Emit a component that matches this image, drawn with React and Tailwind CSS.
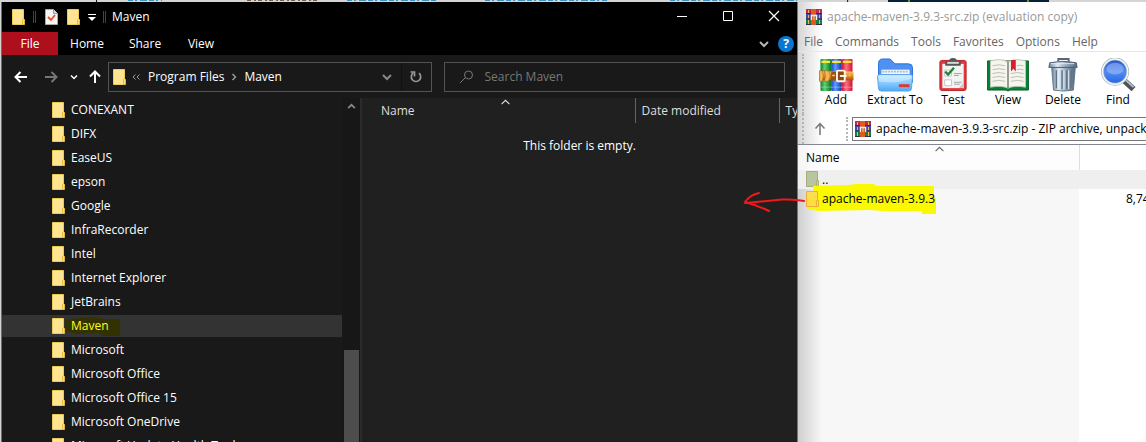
import React from "react";

const folders = ["CONEXANT", "DIFX", "EaseUS", "epson", "Google", "InfraRecorder", "Intel", "Internet Explorer", "JetBrains", "Maven", "Microsoft", "Microsoft Office", "Microsoft Office 15", "Microsoft OneDrive", "Microsoft Update Health Tools"];

function Folder() {
  return (
    <svg className="shrink-0" width="13" height="16" viewBox="0 0 13 16" aria-hidden="true">
      <path d="M.5.5h11v15H.5z" fill="#ffe591" stroke="#eecb55" />
      <path d="M10.5 15.500V10.500l1-1 1 1v5z" fill="#ffe07a" stroke="#e3b93b" />
    </svg>
  );
}

function Glyph({ d, size = 16, className = "", width = 2 }) {
  return (
    <svg className={`shrink-0 ${className}`} width={size} height={size} viewBox="0 0 16 16" fill="none" stroke="currentColor" strokeWidth={width} aria-hidden="true">
      <path d={d} />
    </svg>
  );
}

function Archive() {
  return (
    <svg className="shrink-0" width="16" height="16" viewBox="0 0 16 16" aria-hidden="true">
      <path d="M0 0h16v5H0z" fill="#c2274e" />
      <path d="M0 5h16v5H0z" fill="#4446a8" />
      <path d="M0 10h16v6H0z" fill="#168044" />
      <path d="M0 4.5h16M0 10h16M0 15.5h16" stroke="#302c48" />
      <path d="M2.500 1v3M2.500 6v3M2.500 11v4M13.500 1v3M13.500 6v3M13.500 11v4" stroke="#e8b95c" />
      <path d="M5 0h5v16H5z" fill="#de5a22" />
      <path d="M5.500 11V6.500h5V11" fill="#b33a1c" stroke="#f4eee5" strokeWidth="1.500" />
      <path d="M8 6v5" stroke="#fff3b0" />
    </svg>
  );
}

function Books() {
  return (
    <svg width="36" height="34" viewBox="0 1 36 35" aria-hidden="true">
      <defs>
        <linearGradient id="gbook"><stop stopColor="#137b35" /><stop offset=".4" stopColor="#5bd36d" /><stop offset="1" stopColor="#087428" /></linearGradient>
        <linearGradient id="bbook"><stop stopColor="#1745bd" /><stop offset=".4" stopColor="#5d9bff" /><stop offset="1" stopColor="#1535a1" /></linearGradient>
        <linearGradient id="rbook"><stop stopColor="#c41238" /><stop offset=".4" stopColor="#ff7180" /><stop offset="1" stopColor="#cb1230" /></linearGradient>
        <linearGradient id="belt" x2="0" y2="1"><stop stopColor="#f7c765" /><stop offset=".5" stopColor="#e58b22" /><stop offset="1" stopColor="#a54d0c" /></linearGradient>
      </defs>
      <rect x="2" y="2" width="11" height="33" rx="1" fill="url(#gbook)" />
      <rect x="13" y="2" width="11" height="33" rx="1" fill="url(#bbook)" />
      <rect x="24" y="2" width="11" height="33" rx="1" fill="url(#rbook)" />
      <path d="M3 5h9M14 5h9M25 5h9" stroke="#ffe438" strokeWidth="2.500" />
      <path d="M2 31h33" stroke="#eef1df" opacity=".4" />
      <path d="M1 15h35v9H1z" fill="url(#belt)" />
      <path d="M1 14h3q2 5 0 11H1zM6 14h4q4 5 0 11H6q2-6 0-11z" fill="#f5b650" stroke="#ad651c" strokeWidth=".7" />
      <path d="M13 15h5v9h-5z" fill="#a3500f" />
      <rect x="19" y="14" width="8" height="11" rx="1" fill="#90480c" stroke="#fff4e9" strokeWidth="2" />
      <path d="M22 19.500h7" stroke="#f9f6ef" strokeWidth="2" />
      <path d="M14 19h3M31 19h2" stroke="#f4bf74" strokeWidth="1.500" />
    </svg>
  );
}

function BlueFolder() {
  return (
    <svg width="38" height="34" viewBox="0 1 38 35" aria-hidden="true">
      <defs><linearGradient id="front" x2="0" y2="1"><stop stopColor="#c5e9ff" /><stop offset=".5" stopColor="#89caff" /><stop offset="1" stopColor="#4fa8f4" /></linearGradient></defs>
      <path d="M2 7q0-5 4-5h8l5 5h14q4 0 4 4v15H2z" fill="#4f91f0" stroke="#2872dc" />
      <path d="M5 13h29v8H5z" fill="#f2f5f9" />
      <path d="M6 15h27" stroke="#b0bac8" strokeWidth="2" strokeDasharray="2 1" />
      <path d="M1 20q0-2 3-2h30q3 0 3 2l-1 12q0 3-3 3H5q-3 0-3-3z" fill="url(#front)" stroke="#53a4ed" />
      <path d="M2 25q17 3 34-3v-3H2z" fill="#d9f1ff" opacity=".5" />
      <path d="M23 28h11v3H23z" fill="#dd392e" />
    </svg>
  );
}

function Clipboard() {
  return (
    <svg width="30" height="34" viewBox="0 1 30 35" aria-hidden="true">
      <rect x="1.500" y="3.500" width="27" height="31" rx="2" fill="#e93439" stroke="#b8242b" />
      <path d="M4 7h22v25H4z" fill="#f3f4f2" />
      <path d="M21 32l5-6v6z" fill="#c7cbcc" />
      <path d="M7 9V4h4q0-3 4-3t4 3h4v5z" fill="#55565a" />
      <path d="M9 6h12" stroke="#d7d8da" strokeWidth="2" />
      <path d="M6.500 13.500h7v6h-7zM6.500 23.500h7v6h-7z" fill="#fff" stroke="#bfc6c8" />
      <path d="M7 15l3 3 6-7" fill="none" stroke="#25813a" strokeWidth="2.500" />
      <path d="M16 17h8M16 19h5M16 26h8M16 28h6" stroke="#9ca3a7" />
    </svg>
  );
}

function Book() {
  return (
    <svg width="44" height="34" viewBox="0 1 44 35" aria-hidden="true">
      <path d="M1 4h42v30H24l-2 1-2-1H1z" fill="#078336" stroke="#045c25" />
      <path d="M4 31V4q11-3 18 1 7-4 18-1v27q-11-2-18 1-7-3-18-1z" fill="#f6f5ec" stroke="#bfc4b8" />
      <path d="M22 5v27" stroke="#777b75" strokeWidth="1.500" />
      <path d="M6 9q7-2 13 0M6 13q7-2 13 0M6 17q7-2 13 0M6 21q7-2 13 0M6 25q7-2 13 0M25 17q7-2 13 0M25 21q7-2 13 0M25 25q7-2 13 0M31 9q4-1 7 0M31 13q4-1 7 0" fill="none" stroke="#b9bdb8" />
      <path d="M25 3h5v12l-2.500-3-2.500 3z" fill="#d5212d" />
    </svg>
  );
}

function Trash() {
  return (
    <svg width="32" height="34" viewBox="0 0 32 36" aria-hidden="true">
      <defs><linearGradient id="steel"><stop stopColor="#6b829c" /><stop offset=".3" stopColor="#e1eaf2" /><stop offset=".6" stopColor="#93a9bd" /><stop offset="1" stopColor="#52677d" /></linearGradient></defs>
      <path d="M11 4V1h11v3" fill="none" stroke="#5b6775" strokeWidth="2" />
      <path d="M4 10h25l-2 24q-10 2-21 0z" fill="url(#steel)" stroke="#627487" />
      <path d="M9 13v19M15 13v20M20 13v20M25 13l-1 19" stroke="#5f7389" strokeWidth="1.500" />
      <path d="M11 13v19M17 13v20M22 13v20" stroke="#e9f1f6" />
      <path d="M2 5q14-3 28 0l1 5H1z" fill="url(#steel)" stroke="#4c5b6d" />
      <path d="M3 6h25" stroke="#e2eaf0" />
    </svg>
  );
}

function Magnifier() {
  return (
    <svg width="38" height="34" viewBox="0 1 38 35" aria-hidden="true">
      <defs><linearGradient id="lens" x2="0" y2="1"><stop stopColor="#1b4fc5" /><stop offset=".5" stopColor="#548cee" /><stop offset="1" stopColor="#1e65ec" /></linearGradient></defs>
      <path d="M24 23l11 10" stroke="#4d535a" strokeWidth="6" />
      <path d="M25 22l10 9" stroke="#bac1c9" strokeWidth="2" />
      <circle cx="16" cy="15" r="13" fill="url(#lens)" stroke="#a4b1bf" strokeWidth="3" />
      <circle cx="16" cy="15" r="13" fill="none" stroke="#f4f8fc" strokeWidth="1.500" />
      <ellipse cx="16" cy="12" rx="9" ry="6" fill="#a9c3ff" opacity=".5" />
    </svg>
  );
}

const tools = [
  ["Add", Books, "w-[56px]"],
  ["Extract To", BlueFolder, "w-[62px]"],
  ["Test", Clipboard, "w-[54px]"],
  ["View", Book, "w-[56px]"],
  ["Delete", Trash, "w-[54px]"],
  ["Find", Magnifier, "w-[56px]"],
];

function Explorer() {
  return (
    <section className="ml-px flex min-w-0 flex-col border-l border-[#6d6d6d] bg-[#191919] text-white" aria-label="Maven">
      <header className="flex h-[30px] shrink-0 items-center bg-black pl-[10px]">
        <Folder />
        <i className="ml-2 h-3 w-[3px] border-x border-[#444]" />
        <svg className="ml-[9px]" width="13" height="16" viewBox="0 0 13 16" aria-hidden="true">
          <path d="M.5.5h8l4 4v11H.5z" fill="#f6f6f6" stroke="#aaa" />
          <path d="M8.500.5v4h4" fill="#ddd" stroke="#999" />
          <path d="M3 8l3 3 4-5" fill="none" stroke="#e35223" strokeWidth="1.800" />
        </svg>
        <span className="ml-[9px]"><Folder /></span>
        <button aria-label="Customize toolbar" className="ml-2">
          <svg width="8" height="7" viewBox="0 0 8 7" fill="white" aria-hidden="true"><path d="M0 0h8v1H0zM0 3h8L4 7z" /></svg>
        </button>
        <i className="ml-[7px] h-3 w-[3px] border-x border-[#444]" />
        <h1 className="ml-[6px] grow">Maven</h1>
        <button aria-label="Minimize" className="flex h-full w-[46px] items-center justify-center"><Glyph d="M3 7.500h10" width={1} /></button>
        <button aria-label="Maximize" className="flex h-full w-[46px] items-center justify-center"><Glyph d="M3.500 2.500h9v9h-9z" width={1} /></button>
        <button aria-label="Close" className="flex h-full w-[46px] items-center justify-center"><Glyph d="M3 2l10 10M13 2L3 12" width={1.2} /></button>
      </header>
      <nav className="flex h-[23px] shrink-0 items-center bg-black pr-[3px]">
        <button className="h-full w-[56px] bg-[#ae0f1c]">File</button>
        <button className="w-[58px]">Home</button>
        <button className="w-[58px]">Share</button>
        <button className="w-[54px]">View</button>
        <button aria-label="Expand ribbon" className="ml-auto text-[#b5b5b5]"><Glyph d="M4 6l4 4 4-4" width={2} /></button>
        <button aria-label="Help" className="ml-[6px] size-4 rounded-full bg-[#0877d2] font-bold leading-4">?</button>
      </nav>
      <div className="flex h-[43px] shrink-0 items-center pl-[11px] pr-3">
        <button aria-label="Back"><Glyph d="M14 8H3M7.500 3L2.500 8l5 5" /></button>
        <button aria-label="Forward" className="ml-[14px] text-[#777]"><Glyph d="M2 8h11M8.500 3l5 5-5 5" /></button>
        <button aria-label="Recent locations" className="ml-[11px]"><Glyph d="M2 5l6 6 6-6" size={8} width={3} /></button>
        <button aria-label="Up" className="ml-[9px]"><Glyph d="M8 14V3M3 7.500l5-5 5 5" /></button>
        <div className="ml-[5px] flex h-[30px] min-w-0 flex-[318] items-center border border-[#535353] pl-1">
          <Folder />
          <Glyph className="ml-[6px] text-[#999]" d="M7 3L2 8l5 5M15 3l-5 5 5 5" size={8} />
          <button className="ml-2 whitespace-nowrap">Program Files</button>
          <Glyph className="ml-[6px] text-[#999]" d="M5 2l6 6-6 6" size={8} width={3} />
          <button className="ml-[6px]">Maven</button>
          <button aria-label="Previous locations" className="ml-auto text-[#888]"><Glyph d="M4 6l4 4 4-4" /></button>
          <button aria-label="Refresh" className="ml-[6px] flex h-full w-[30px] items-center justify-center border-l border-[#111] text-[#999]"><Glyph d="M11 4.200a4.700 4.700 0 1 1-6 0M2.500 3h4v4.500" width={1.7} /></button>
        </div>
        <label className="ml-3 flex h-[30px] min-w-0 flex-[327] items-center border border-[#535353] pl-[13px] text-[#777]">
          <Glyph d="M2 14l5-5M6.500 6a4 4 0 1 1 8 0a4 4 0 1 1-8 0" width={1} />
          <input aria-label="Search Maven" placeholder="Search Maven" className="ml-[11px] min-w-0 grow bg-transparent outline-none placeholder:text-[#777]" />
        </label>
      </div>
      <div className="flex min-h-0 grow">
        <aside className="flex w-[360px] shrink-0 border-r-2 border-[#2b2b2b]">
          <ul className="w-[340px] shrink-0 overflow-hidden">
            {folders.map((name) => (
              <li key={name} className={name === "Maven" ? "my-px flex h-[22px] items-center bg-[#333] pl-[50px] text-[#ffff20]" : "flex h-6 items-center pl-[50px]"}>
                <Folder />
                <span className={name === "Maven" ? "relative z-0 ml-[6px]" : "ml-[6px] whitespace-nowrap"}>
                  {name === "Maven" && <svg className="absolute -left-[6px] -top-[1px] -z-10" width="56" height="20" viewBox="0 0 56 20" aria-hidden="true"><path d="M0 3l15-2 14-1 12 2h14v17H38l-5-3-19 1-14-3z" fill="#323200" /></svg>}
                  {name}
                </span>
              </li>
            ))}
          </ul>
          <div className="flex w-[18px] flex-col items-center bg-[#171717] pl-px text-[#888]">
            <Glyph className="mt-1" d="M2 11l6-6 6 6" size={9} width={3} />
            <div className="mt-[239px] w-[15px] grow bg-[#4d4d4d]" />
          </div>
        </aside>
        <main className="min-w-0 grow overflow-hidden bg-[#202020]">
          <table className="w-full table-fixed text-left text-[#dedede]">
            <thead>
              <tr className="h-[25px]">
                <th className="relative border-r border-[#636363] pl-[19px] font-normal">Name<span className="absolute left-[139px] top-0"><Glyph d="M1 11l7-7 7 7" size={9} /></span></th>
                <th className="w-[144px] border-r border-[#636363] pl-[6px] font-normal">Date modified</th>
                <th className="w-[18px] overflow-hidden pl-[6px] font-normal">Type</th>
              </tr>
            </thead>
            <tbody><tr><td colSpan={3} className="pt-[15px] text-center text-white">This folder is empty.</td></tr></tbody>
          </table>
        </main>
      </div>
    </section>
  );
}

function ArchiveWindow() {
  return (
    <section className="flex min-w-0 flex-col overflow-hidden border-l border-[#777] bg-white text-black" aria-label="Archive">
      <div className="shrink-0 bg-linear-to-r from-[#d5d5d5] to-white to-[24px]">
        <header className="flex h-[30px] items-center pl-2 text-[#999]"><Archive /><h2 className="ml-[5px] whitespace-nowrap">apache-maven-3.9.3-src.zip (evaluation copy)</h2></header>
        <nav className="flex h-[20px] items-center gap-3 border-b border-[#e7e7e7] pl-[6px] text-[#666]">
          {["File", "Commands", "Tools", "Favorites", "Options", "Help"].map((m) => <button key={m}>{m}</button>)}
        </nav>
        <div className="flex h-[62px] pl-1 pt-[2px]">
          <i className="h-full border-l-2 border-dotted border-[#b5b5b5]" />
          <div className="ml-1 flex pt-1">
            {tools.map(([name, Icon, width]) => (
              <button key={name} className={`flex shrink-0 flex-col items-center whitespace-nowrap ${width}`}>
                <Icon /><span className="leading-4">{name}</span>
              </button>
            ))}
          </div>
        </div>
        <div className="flex h-[30px] items-center pl-1">
          <i className="h-full border-l-2 border-dotted border-[#b5b5b5]" />
          <button aria-label="Up one level" className="ml-2 text-[#777]"><Glyph d="M8 14V3M3.500 7.500l4.500-5 4.500 5" width={1.500} /></button>
          <i className="ml-[18px] h-6 border-l-2 border-dotted border-[#b5b5b5]" />
          <div className="ml-1 flex h-6 min-w-0 grow items-center overflow-hidden border border-r-0 border-[#777] bg-white pl-[2px]">
            <Archive /><span className="ml-[5px] whitespace-nowrap">apache-maven-3.9.3-src.zip - ZIP archive, unpacked</span>
          </div>
        </div>
      </div>
      <div className="flex min-h-0 grow border-t border-[#828790] bg-linear-to-r from-[#cfcfcf] to-[#f7f7f7] to-[24px]">
        <table className="h-full w-full table-fixed text-left">
          <thead>
            <tr className="h-[25px] bg-white/80">
              <th className="relative border-r border-[#ddd] pl-2 font-normal">Name<span className="absolute left-[137px] top-0 text-[#666]"><Glyph d="M1 11l7-7 7 7" size={9} /></span></th>
              <th className="w-[67px] bg-white"><span className="sr-only">Size</span></th>
            </tr>
          </thead>
          <tbody className="align-top">
            <tr className="h-[19px] bg-[#efefef]"><td className="pl-2"><span className="flex gap-[3px] leading-[19px]"><svg width="13" height="16" viewBox="0 0 13 16" className="mt-[1px]" aria-hidden="true"><path d="M.5.5h11v15H.5z" fill="#b9c5a0" stroke="#a5ae77" /><path d="M10.500 9.500h2v6h-2z" fill="#c7d0a9" stroke="#a5ae77" /></svg>..</span></td><td /></tr>
            <tr className="h-[20px]">
              <td className="pl-2"><span className="relative z-0 flex items-center gap-[3px] leading-5">
                <svg className="absolute left-[2px] -top-[5px] -z-10" width="128" height="30" viewBox="0 0 128 30" aria-hidden="true"><path d="M0 25V12l5-2V2l35-1 8-1h18l2 2h58v11l2 1v16h-14v-3H75L62 26l-52 1z" fill="#fbf900" /></svg>
                <svg width="13" height="16" viewBox="0 0 13 16" aria-hidden="true"><path d="M.5.5h11v15H.5z" fill="#ffd84f" fillOpacity=".85" stroke="#ecae35" /><path d="M10.500 9.500h2v6h-2z" fill="#ffe46c" stroke="#ecae35" /></svg>
                apache-maven-3.9.3</span></td>
              <td className="overflow-hidden whitespace-nowrap bg-white pl-[47px] leading-5">8,740,219</td>
            </tr>
            <tr><td /><td className="bg-white" /></tr>
          </tbody>
        </table>
      </div>
    </section>
  );
}

export default function App() {
  return (
    <div className="relative flex h-screen flex-col overflow-hidden bg-[#d4d4d4] font-['Open_Sans','Noto_Sans',sans-serif] text-[12px] leading-4">
      <div className="flex h-[2px] shrink-0">
        <svg className="w-[77.5%]" height="2" viewBox="0 0 888 2" preserveAspectRatio="none" aria-hidden="true">
          <path d="M128 .5h34M347 .5h90M485 .5h122M670 .5h127" stroke="#3c93c2" strokeDasharray="5 2 2 3 7 2" />
          <path d="M247 .5h72" stroke="#76604f" strokeDasharray="4 3 2 2" />
          <path d="M96.500 0v2M847.500 0v2" stroke="#111" />
        </svg>
        <i className="flex w-[14%] justify-between bg-[#06213a] px-5"><b className="w-[2px] bg-[#6f9420]" /><b className="w-[2px] bg-[#6f9420]" /></i>
      </div>
      <div className="grid min-h-0 grow grid-cols-[797fr_349fr]"><Explorer /><ArchiveWindow /></div>
      <svg className="pointer-events-none absolute left-[742px] top-[190px]" width="68" height="26" viewBox="0 0 68 26" fill="none" stroke="#f01818" strokeWidth="2" strokeLinecap="round" aria-hidden="true">
        <path d="M62 11q-8-2-22-1.500L3 13M17 3Q8 5 3 12q11 3 24 9" />
      </svg>
    </div>
  );
}
